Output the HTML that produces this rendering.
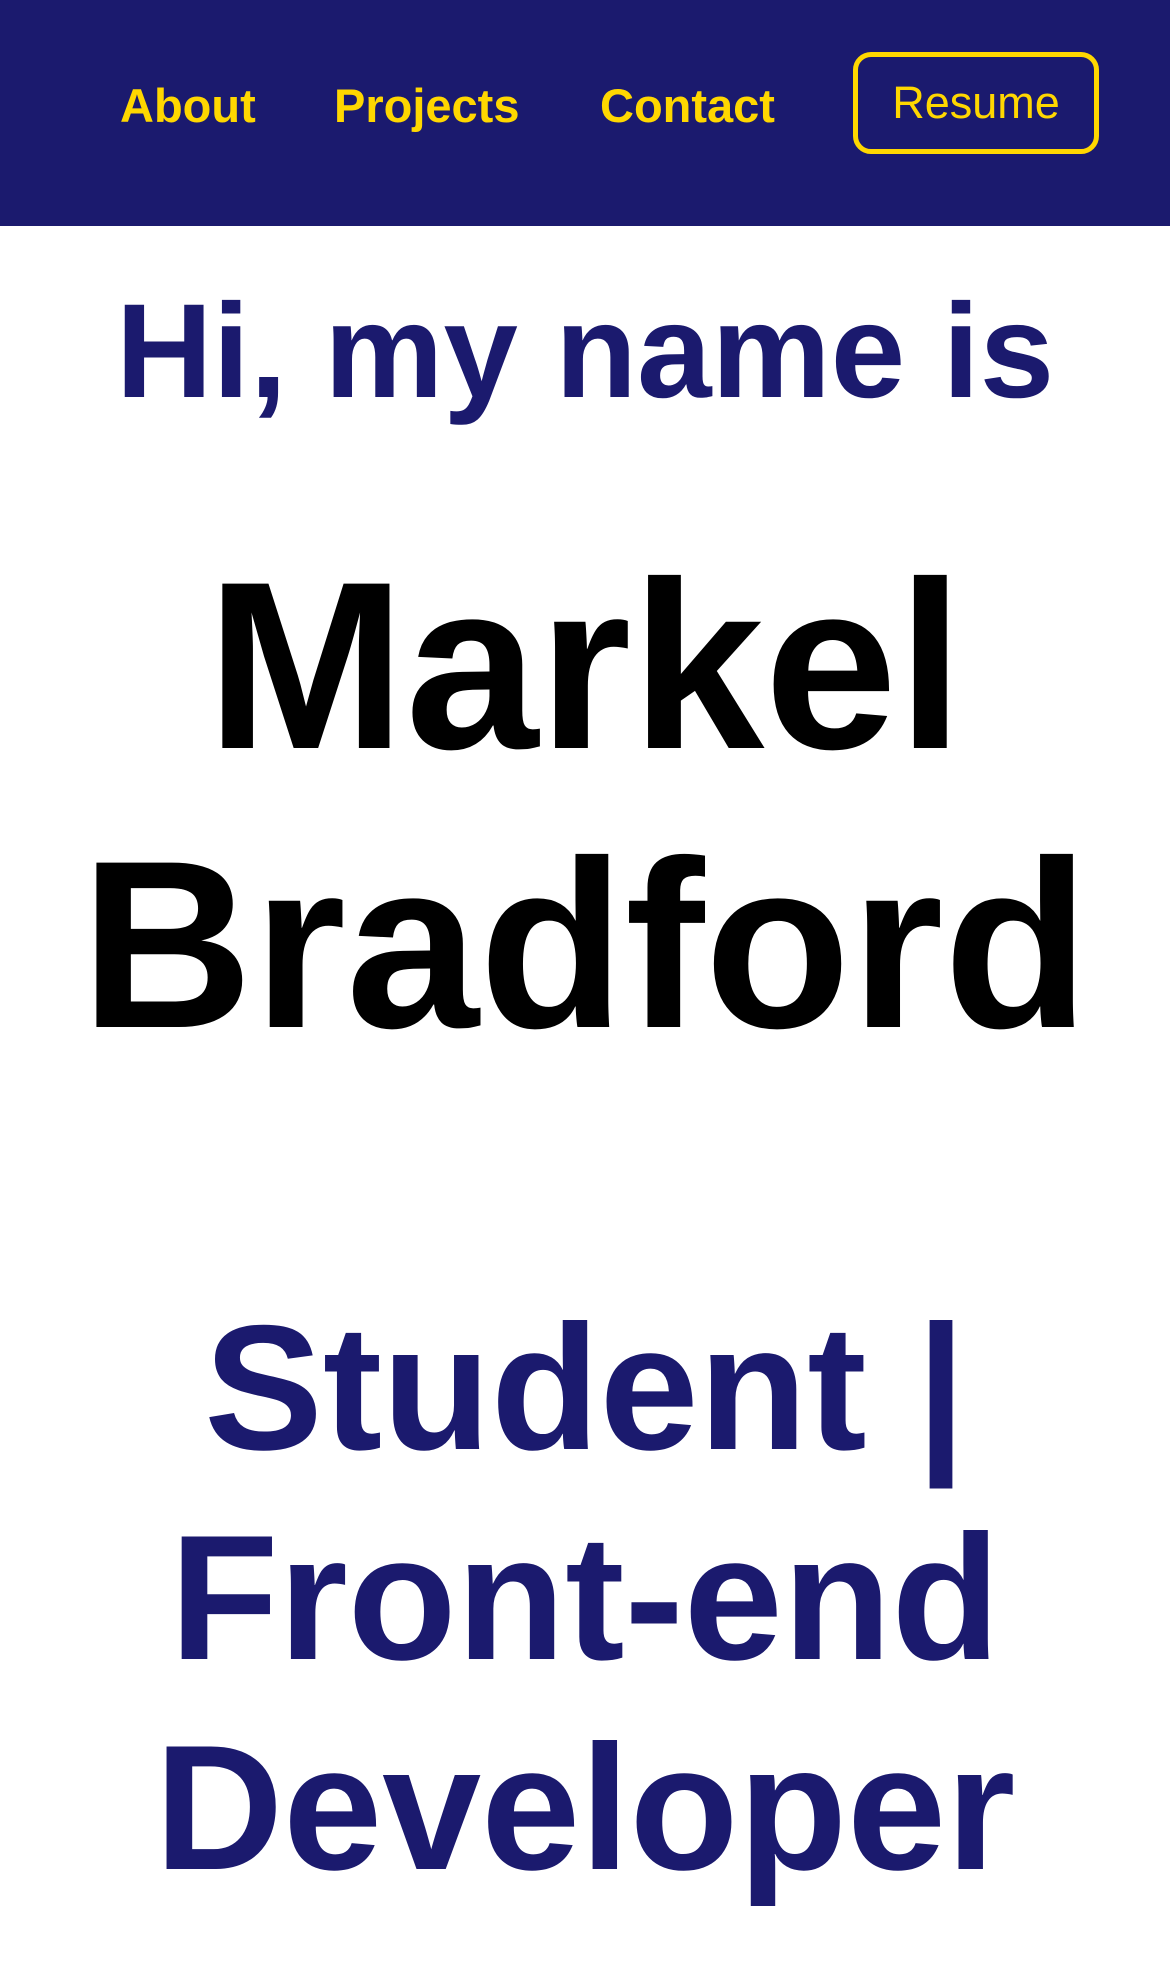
<!DOCTYPE html>
<html><head><meta charset="utf-8"><style>
html,body{margin:0;padding:0;width:1170px;height:1969px;background:#fff;overflow:hidden;font-family:"Liberation Sans",Arial,sans-serif}
.nav{position:absolute;left:0;top:0;width:1170px;height:226px;background:#1b1a6e}
.l{position:absolute;color:#ffd700;font-weight:bold;font-size:47px;line-height:54px;top:79px;white-space:nowrap}
.btn{position:absolute;left:853px;top:52px;width:236px;height:92px;border:5px solid #ffd700;border-radius:18px;color:#ffd700;font-size:45px;line-height:92px;text-align:center}
.t{position:absolute;left:0;width:1170px;text-align:center;font-weight:bold;white-space:nowrap}
</style></head><body>
<div class="nav">
<div class="l" style="left:120px">About</div>
<div class="l" style="left:334px">Projects</div>
<div class="l" style="left:600px">Contact</div>
<div class="btn">Resume</div>
</div>
<div class="t" style="top:272px;font-size:134px;line-height:160px;color:#1b1a6e">Hi, my name is</div>
<div class="t" style="top:526px;font-size:239px;line-height:279px;color:#000">Markel<br>Bradford</div>
<div class="t" style="top:1283px;font-size:178px;line-height:210px;color:#1b1a6e">Student |<br>Front-end<br>Developer</div>
</body></html>
